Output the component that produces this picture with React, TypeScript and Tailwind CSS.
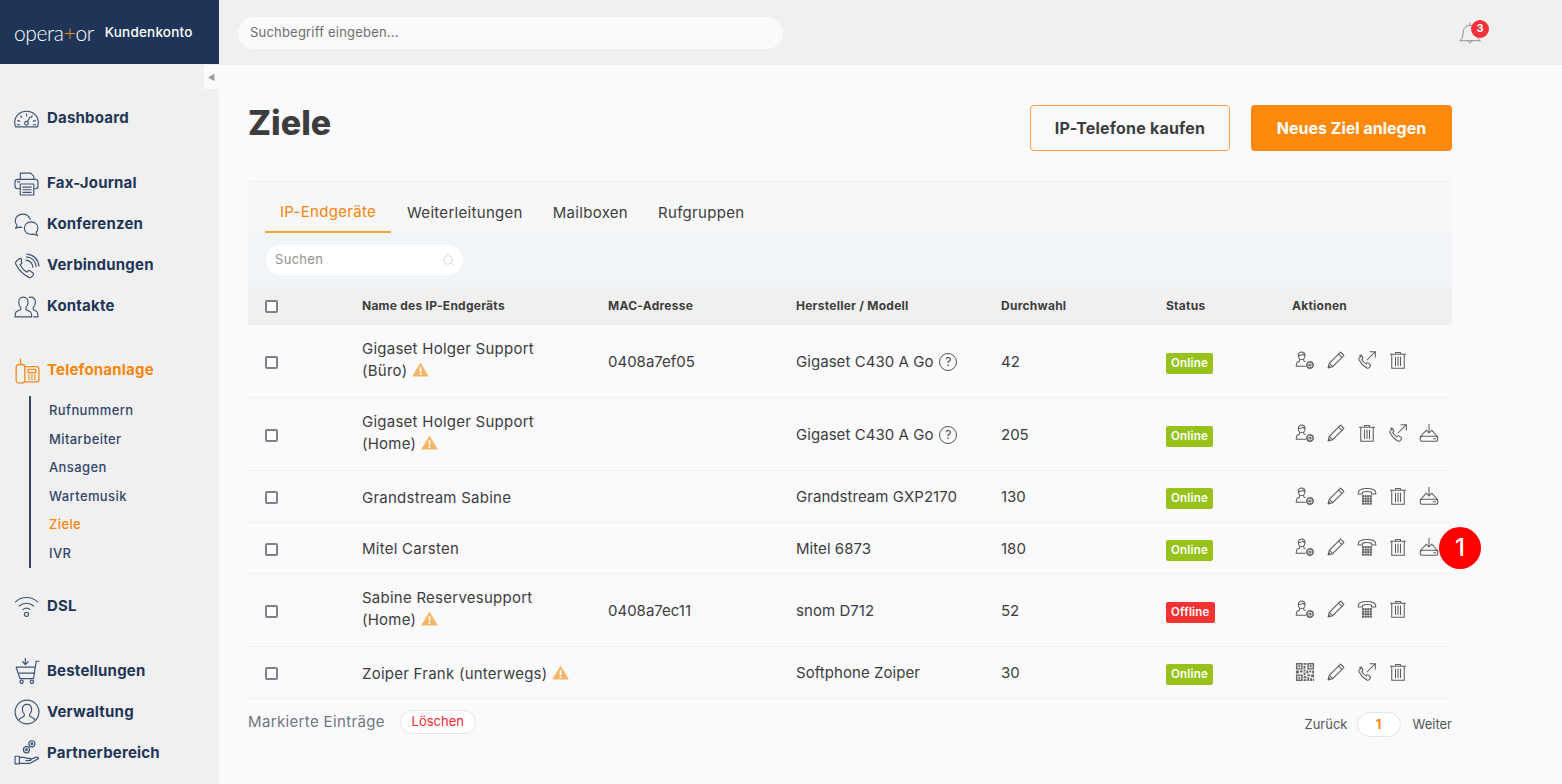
import React from 'react';
import { Search } from 'lucide-react';

const line = { fill: 'none', stroke: 'currentColor', strokeLinecap: 'round', strokeLinejoin: 'round' } as const;

const Svg = ({ size = 20, sw = 1.25, children }: { size?: number; sw?: number; children: React.ReactNode }) => (
  <svg width={size} height={size} viewBox="0 0 24 24" strokeWidth={sw} {...line}>
    {children}
  </svg>
);

// action icons
const UserGear = () => (
  <Svg>
    <path d="M8 2.500c-2.600 0-4 2-4 4.300s1.500 4.700 4 4.700 4-2.400 4-4.700-1.400-4.300-4-4.300z" />
    <path d="M4.200 6.500c2 .3 4-.3 5-1.800.5 1 1.500 1.700 2.700 1.800" />
    <path d="M5.500 11.500v1.600l-2.800 1.500c-1 .6-1.200 1.500-1.200 4.900h11" />
    <path d="M10.500 11.500v1.500l1.800 1" />
    <circle cx="18" cy="18" r="3.800" strokeWidth={1.800} strokeDasharray="2 .6" />
    <circle cx="18" cy="18" r="1.300" />
  </Svg>
);
const PencilIcon = () => (
  <Svg>
    <path d="M17.500 2.500l4 4L8 20l-5.500 1.500L4 16z" />
    <path d="M15 5l4 4M4 16l4 4M3.300 19l1.700 1.700" />
  </Svg>
);
const PhoneOut = () => (
  <Svg>
    <path d="M5 7.500L2.800 9.200c-.7.600-.8 1.500-.3 2.500 2 4 5.500 7.800 9.500 9.800 1 .5 2 .3 2.600-.4l1.500-2c.4-.5.300-1.200-.2-1.600l-2.700-2c-.5-.3-1.200-.3-1.600.2l-.8 1c-2.200-1.200-4-3.200-5.200-5.300l1-.9c.5-.4.600-1.100.2-1.600l-1.800-2.400c-.4-.5-1.300-.5-1.800 0z" />
    <path d="M12 12L22 2M15.500 2H22v6.500" />
  </Svg>
);
const Trash = () => (
  <Svg>
    <path d="M3 5h18M9 5V3h6v2" />
    <path d="M4.500 5v17h15V5" />
    <path d="M9 8.500v10M12 8.500v10M15 8.500v10" />
  </Svg>
);
const Provision = () => (
  <Svg>
    <path d="M12 1.500V12M8.500 8.500L12 12l3.500-3.500" />
    <path d="M8 9.500L1.500 16.500M16 9.500l6.500 7" />
    <rect x="1.500" y="16" width="21" height="6" rx="2.500" />
    <path d="M17.500 19H20" />
  </Svg>
);
const DeskPhone = () => (
  <Svg>
    <path d="M1.500 8.500C1.500 4.500 6 3 12 3s10.500 1.500 10.500 5.500v1h-5V7.500c-3-1-8-1-11 0v2h-5z" />
    <g fill="currentColor" stroke="none">
      {[0, 1, 2, 3].map((r) =>
        [0, 1, 2, 3].map((c) => <rect key={`${r}-${c}`} x={6 + c * 3.100} y={11 + r * 3} width="2.600" height="2.400" />)
      )}
    </g>
  </Svg>
);
const QrCode = () => (
  <svg width="20" height="20" viewBox="0 0 21 21" fill="#666">
    <path d="M1 1h7v7H1zM2.500 2.500v4h4v-4zM13 1h7v7h-7zM14.500 2.500v4h4v-4zM1 13h7v7H1zM2.500 14.500v4h4v-4z" fillRule="evenodd" />
    <path d="M3.500 3.500h2v2h-2zM15.500 3.500h2v2h-2zM3.500 15.500h2v2h-2zM9 1h3v2H9zM9 4h2v3H9zM1 9h3v3H1zM5 9h3v2H5zM9 8h2v2H9zM12 9h2v3h-2zM15 9h2v2h-2zM18 9h2v3h-2zM9 11h2v3H9zM13 13h3v2h-3zM17 13h3v3h-3zM9 15h3v2H9zM13 16h2v4h-2zM16 17h2v3h-2zM9 18h3v2H9zM19 17h1v3h-1z" />
  </svg>
);

// sidebar icons
const navy = 'text-[#3f5573]';
const Gauge = () => (
  <Svg size={25} sw={1.1}>
    <path d="M1.500 20c-.6-1.400-.8-2.800-.8-4.300C.7 9.500 5.800 5 12 5s11.300 4.500 11.300 10.700c0 1.500-.2 2.900-.8 4.300z" />
    <path d="M12 7.500v2M6.500 9.500l1 1.500M17.500 9.500l-1 1.500M3.500 14l2 .5M20.500 14l-2 .5M3 18h2.500M18.500 18H21" />
    <path d="M15.500 10.500L12.800 15" />
    <circle cx="12" cy="16.500" r="1.800" />
  </Svg>
);
const Printer = () => (
  <Svg size={25} sw={1.1}>
    <path d="M6 8V2h10l3 3v3" />
    <path d="M6 17H3.500C2 17 1 16 1 14.500v-4C1 9 2 8 3.500 8h17c1.500 0 2.500 1 2.500 2.500v4c0 1.500-1 2.500-2.500 2.500H19" />
    <path d="M6 12.500h13V23H6zM8.500 15.500h8M8.500 18h8M8.500 20.500h8" />
    <path d="M3.500 10.500h2" />
  </Svg>
);
const Bubbles = () => (
  <Svg size={25} sw={1.1}>
    <path d="M15.500 7C14.500 4 11.800 2 8.500 2 4.500 2 1.200 4.800 1.200 8.500c0 1.800.7 3.200 1.800 4.300L1.500 15.500l4-1c.7.200 1.300.3 2 .3" />
    <path d="M23 15.500c0-3.500-2.800-6-6.500-6S10 12 10 15.500s2.800 6 6.500 6c.7 0 1.300-.1 2-.3l4 1.300-1.300-3.100c1-1 1.800-2.300 1.800-3.900z" />
  </Svg>
);
const PhoneWaves = () => (
  <Svg size={26} sw={1.1}>
    <path d="M4 6L2 7.800c-.6.600-.8 1.500-.4 2.400 2.500 5 7 9.800 12 12.300 1 .5 2 .3 2.600-.4l1.600-2c.4-.5.300-1.200-.2-1.600l-3-2.200c-.5-.3-1.200-.3-1.600.2l-1 1.200c-2.800-1.500-5-4-6.500-6.800l1.200-1c.5-.4.600-1.100.2-1.600L6.800 5.300C6 4.800 4.700 5.300 4 6z" />
    <path d="M11 6.500c3.500.5 6 3 6.500 6.500M11.500 3.500c5 .4 8.500 4 9 9M12 1c6 .3 10.500 5 11 11" />
  </Svg>
);
const People = () => (
  <Svg size={25} sw={1.1}>
    <path d="M9 3c-3 0-4.500 2.200-4.500 4.800 0 2 .7 3.700 2 5v2l-4 2C1.500 17.500 1 18.500 1 22h16c0-3.500-.5-4.500-1.500-5l-4-2v-2.200c1.300-1.300 2-3 2-5C13.500 5.200 12 3 9 3z" />
    <path d="M14.500 3.200C15 3 15.500 3 16 3c3 0 4.500 2.200 4.500 4.800 0 2-.7 3.700-2 5v2l3 1.700c1 .5 1.500 1.500 1.500 5.500h-4" />
  </Svg>
);
const TelephoneBase = () => (
  <Svg size={26} sw={1.200}>
    <path d="M6 6V1" />
    <rect x="2" y="6" width="8" height="17" rx="2.500" />
    <path d="M10 8h11c1 0 2 1 2 2v10c0 1-1 2-2 2H9.500" />
    <path d="M13 10.500h7v3h-7z" />
    <g fill="currentColor" stroke="none">
      {[0, 1, 2].map((r) =>
        [0, 1, 2].map((c) => <rect key={`${r}-${c}`} x={13 + c * 2.700} y={15 + r * 2} width="1.600" height="1.200" />)
      )}
    </g>
  </Svg>
);
const Wifi = () => (
  <Svg size={25} sw={1.1}>
    <path d="M1.500 7.500C7.500 2 16.500 2 22.500 7.500M5 11.500c4-3.500 10-3.500 14 0M8.500 15c2-1.600 5-1.600 7 0" />
    <circle cx="12" cy="19.500" r="2" />
  </Svg>
);
const Cart = () => (
  <Svg size={26} sw={1.1}>
    <path d="M23 3h-2.500l-2.500 16H5.500L2 8.500h17.500" />
    <path d="M5 14h14" />
    <circle cx="7" cy="22" r="1.500" />
    <circle cx="16.500" cy="22" r="1.500" />
    <path d="M10.500 0v6M8 3.500L10.500 6 13 3.500" />
  </Svg>
);
const UserRing = () => (
  <Svg size={26} sw={1.1}>
    <circle cx="12" cy="12" r="11" />
    <path d="M12 5c-3 0-4.300 2.200-4.300 4.600 0 1.800.7 3.300 1.800 4.400v1.700l-3.500 2c-.6.300-1 .8-1.300 1.600M12 5c3 0 4.300 2.200 4.300 4.600 0 1.800-.7 3.300-1.800 4.400v1.700l3.500 2c.6.300 1 .8 1.300 1.600" />
  </Svg>
);
const HandCoins = () => (
  <Svg size={26} sw={1.1}>
    <circle cx="16.500" cy="3.500" r="2.800" />
    <circle cx="16.500" cy="3.500" r=".8" />
    <circle cx="11.500" cy="9" r="2.800" />
    <circle cx="11.500" cy="9" r=".8" />
    <path d="M1 15h4v7H1zM5 16h4c1.500 0 2 .5 3 1h3c1 0 1 2 0 2h-4" />
    <path d="M15 18l5-2c2-.6 3 .5 2.500 1.200L15 21.500H5" />
  </Svg>
);

const Warn = () => (
  <svg width="17" height="15" viewBox="0 0 17 15" className="inline-block align-[-1px]">
    <path d="M8.500.5L16.800 14.500H.2z" fill="#f3b566" />
    <rect x="7.700" y="5" width="1.700" height="5.200" fill="#fff" />
    <rect x="7.700" y="11.100" width="1.700" height="1.800" fill="#fff" />
  </svg>
);

const Help = () => (
  <span className="inline-flex items-center justify-center w-[18px] h-[18px] ml-[6px] rounded-full border border-[#555] text-[12px] text-[#444] leading-none">?</span>
);

const Check = () => <span className="block w-[13px] h-[13px] rounded-[2px] border-2 border-[#7c8191] bg-white" />;

const Item = ({ icon, label, active }: { icon: React.ReactNode; label: string; active?: boolean }) => (
  <div className={`flex items-center h-[41px] pl-[14px] font-bold text-[15px] tracking-[0.2px] ${active ? 'text-[#f5850c]' : 'text-[#1f3557]'}`}>
    <span className={`w-[33px] flex justify-start ${active ? 'text-[#f28c1e]' : navy}`}>{icon}</span>
    {label}
  </div>
);

type Row = {
  name: React.ReactNode;
  mac?: string;
  model: string;
  help?: boolean;
  ext: string;
  on: boolean;
  acts: React.ReactNode[];
  h: string;
  marker?: boolean;
};

const rows: Row[] = [
  {
    name: <>Gigaset Holger Support<br />(Büro) <Warn /></>,
    mac: '0408a7ef05', model: 'Gigaset C430 A Go', help: true, ext: '42', on: true, h: 'h-[73px]',
    acts: [<UserGear />, <PencilIcon />, <PhoneOut />, <Trash />],
  },
  {
    name: <>Gigaset Holger Support<br />(Home) <Warn /></>,
    model: 'Gigaset C430 A Go', help: true, ext: '205', on: true, h: 'h-[73px]',
    acts: [<UserGear />, <PencilIcon />, <Trash />, <PhoneOut />, <Provision />],
  },
  {
    name: 'Grandstream Sabine',
    model: 'Grandstream GXP2170', ext: '130', on: true, h: 'h-[52px]',
    acts: [<UserGear />, <PencilIcon />, <DeskPhone />, <Trash />, <Provision />],
  },
  {
    name: 'Mitel Carsten',
    model: 'Mitel 6873', ext: '180', on: true, h: 'h-[51px]', marker: true,
    acts: [<UserGear />, <PencilIcon />, <DeskPhone />, <Trash />, <Provision />],
  },
  {
    name: <>Sabine Reservesupport<br />(Home) <Warn /></>,
    mac: '0408a7ec11', model: 'snom D712', ext: '52', on: false, h: 'h-[73px]',
    acts: [<UserGear />, <PencilIcon />, <DeskPhone />, <Trash />],
  },
  {
    name: <>Zoiper Frank (unterwegs) <Warn /></>,
    model: 'Softphone Zoiper', ext: '30', on: true, h: 'h-[52px]',
    acts: [<QrCode />, <PencilIcon />, <PhoneOut />, <Trash />],
  },
];

const cols = 'grid grid-cols-[114px_246px_188px_205px_165px_126px_159px] items-center';

export default function App() {
  return (
    <div className="flex h-screen w-full overflow-hidden bg-[#fafafc] text-[#3d3d3d] font-['Inter','Liberation_Sans',sans-serif]">
      <aside className="relative w-[219px] shrink-0 bg-[#f0f0f0]">
        <div className="flex items-center h-[64px] pl-[14px] pt-[1px] bg-[#1f3557] text-white">
          <span className="text-[21px] font-light tracking-[-0.4px] font-['Lato',sans-serif]">
            opera<span className="text-[#f28c1e]">+</span>or
          </span>
          <span className="ml-[11px] text-[13.500px] font-medium tracking-[0.2px]">Kundenkonto</span>
        </div>
        <div className="absolute right-0 top-[65px] flex items-center justify-center w-[15px] h-[24px] bg-[#fafafc] text-[8px] text-[#9a9a9a]">◀</div>
        <nav className="flex flex-col pt-[34px]">
          <Item icon={<Gauge />} label="Dashboard" />
          <div className="mt-[24px]">
            <Item icon={<Printer />} label="Fax-Journal" />
            <Item icon={<Bubbles />} label="Konferenzen" />
            <Item icon={<PhoneWaves />} label="Verbindungen" />
            <Item icon={<People />} label="Kontakte" />
          </div>
          <div className="mt-[23px]">
            <Item active icon={<TelephoneBase />} label="Telefonanlage" />
            <ul className="mt-[5px] ml-[29px] pl-[18px] border-l-2 border-[#33466a] text-[13px] font-medium tracking-[0.4px] text-[#33466a]">
              {['Rufnummern', 'Mitarbeiter', 'Ansagen', 'Wartemusik', 'Ziele', 'IVR'].map((s) => (
                <li key={s} className={`h-[28.6px] leading-[28.6px] ${s === 'Ziele' ? 'text-[#f5850c]' : ''}`}>{s}</li>
              ))}
            </ul>
          </div>
          <div className="mt-[18px]">
            <Item icon={<Wifi />} label="DSL" />
          </div>
          <div className="mt-[24px]">
            <Item icon={<Cart />} label="Bestellungen" />
            <Item icon={<UserRing />} label="Verwaltung" />
            <Item icon={<HandCoins />} label="Partnerbereich" />
          </div>
        </nav>
      </aside>

      <div className="flex-1 min-w-0">
        <header className="flex items-center h-[65px] bg-[#f0f0f0] pl-[19px] pr-[80px]">
          <div className="flex items-center w-[545px] h-[32px] pl-[12px] rounded-full bg-[#fafafc] text-[13px] tracking-[0.2px] text-[#6d6d6d]">Suchbegriff eingeben...</div>
          <div className="relative ml-auto text-[#8a8f99]">
            <svg width="24" height="24" viewBox="0 0 24 24" strokeWidth={1} {...line}>
              <path d="M2 19.500c2-1.500 3-3 3-7.500 0-4.500 3-7.500 7-7.500s7 3 7 7.500c0 4.500 1 6 3 7.500z" />
              <path d="M12 2v2.500M10 19.500c0 3 4 3 4 0" />
            </svg>
            <span className="absolute left-[13px] -top-[1px] flex items-center justify-center w-[18px] h-[18px] rounded-full bg-[#f4303a] text-white text-[11px] font-bold">3</span>
          </div>
        </header>

        <main className="pl-[29px] pr-[110px]">
          <div className="flex items-start justify-between pt-[40px] h-[116px]">
            <h1 className="text-[34px] font-extrabold text-[#3d3d3d] -mt-[8px]">Ziele</h1>
            <div className="flex gap-[21px]">
              <button className="w-[200px] h-[46px] rounded-[4px] border border-[#f5a142] text-[16px] font-bold tracking-[0.2px] text-[#3d3d3d]">IP-Telefone kaufen</button>
              <button className="w-[201px] h-[46px] rounded-[4px] bg-[#fd8a0c] text-[16px] font-bold text-white">Neues Ziel anlegen</button>
            </div>
          </div>

          <section className="rounded-t-[4px] border-t border-[#efefef]">
            <div className="flex h-[51px] pl-[17px] pt-[11px] bg-[#f7f7f8] text-[15px] tracking-[0.3px]">
              <div className="flex items-center px-[15px] -mt-[11px] pt-[11px] border-b-2 border-[#f8a13f] text-[#f5850c]">IP-Endgeräte</div>
              <div className="flex items-center pl-[16px] pr-[15px]">Weiterleitungen</div>
              <div className="flex items-center px-[15px]">Mailboxen</div>
              <div className="flex items-center px-[15px]">Rufgruppen</div>
            </div>
            <div className="flex items-center h-[54px] pl-[18px] bg-[#f2f5f8]">
              <div className="flex items-center justify-between w-[197px] h-[30px] pl-[9px] pr-[8px] rounded-full bg-white text-[13px] tracking-[0.3px] text-[#8f8f8f]">
                Suchen
                <Search size={13} strokeWidth={1.500} className="text-[#d4d4d4]" />
              </div>
            </div>
            <div className={`${cols} h-[38px] bg-[#f0f0f0] text-[12px] font-bold tracking-[0.25px]`}>
              <div className="pl-[17px]"><Check /></div>
              <div>Name des IP-Endgeräts</div>
              <div>MAC-Adresse</div>
              <div>Hersteller / Modell</div>
              <div>Durchwahl</div>
              <div>Status</div>
              <div>Aktionen</div>
            </div>
            {rows.map((r, i) => (
              <div key={i} className={`${cols} ${r.h} pt-[2px] border-b border-[#f1f1f3] text-[15px]`}>
                <div className="pl-[17px]"><Check /></div>
                <div className={`leading-[22px] tracking-[0.25px] ${r.h === 'h-[73px]' ? '-mt-[4px]' : ''}`}>{r.name}</div>
                <div>{r.mac}</div>
                <div className="flex items-center tracking-[0.05px]">{r.model}{r.help && <Help />}</div>
                <div>{r.ext}</div>
                <div>
                  <span className={`inline-block h-[21px] px-[5px] rounded-[2px] text-[11.500px] font-semibold tracking-[0.2px] leading-[21px] text-white ${r.on ? 'bg-[#97c21c]' : 'bg-[#f63333]'}`}>
                    {r.on ? 'Online' : 'Offline'}
                  </span>
                </div>
                <div className="relative flex items-center gap-[11px] pl-[3px] -mt-[4px] text-[#5c5c5c]">
                  {r.acts.map((a, j) => <span key={j} className="block w-5 h-5">{a}</span>)}
                  {r.marker && (
                    <span className="absolute left-[147px] top-[-10px] flex items-center justify-center w-[42px] h-[42px] rounded-full bg-[#fe0000] text-white text-[24px] font-medium">1</span>
                  )}
                </div>
              </div>
            ))}
          </section>

          <div className="flex items-start justify-between mt-[11px]">
            <div className="flex items-center gap-[15px]">
              <span className="text-[15px] tracking-[0.35px] text-[#6f7683]">Markierte Einträge</span>
              <span className="flex items-center justify-center w-[76px] h-[24px] rounded-full border border-[#e6e6e8] bg-white text-[13px] text-[#f6262e]">Löschen</span>
            </div>
            <div className="flex items-center mt-[2px] text-[13px] text-[#555]">
              Zurück
              <span className="flex items-center justify-center w-[44px] h-[25px] ml-[9px] mr-[12px] rounded-full border border-[#e6e6e8] bg-white font-bold text-[#f5850c]">1</span>
              Weiter
            </div>
          </div>
        </main>
      </div>
    </div>
  );
}
